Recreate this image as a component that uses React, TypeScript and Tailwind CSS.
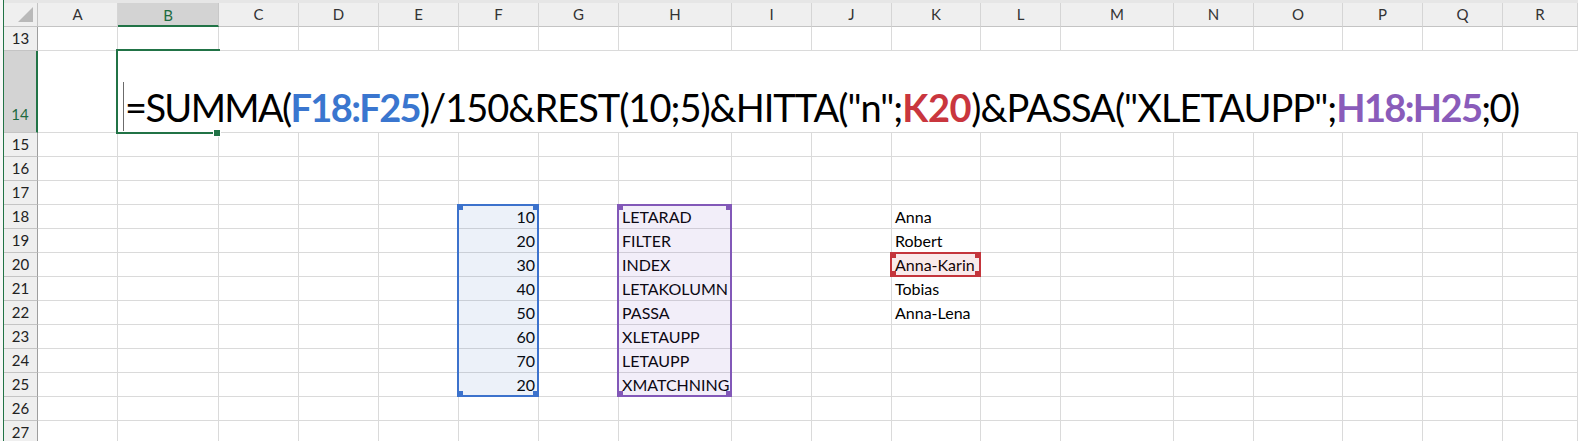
const COLS = ["A", "B", "C", "D", "E", "F", "G", "H", "I", "J", "K", "L", "M", "N", "O", "P", "Q", "R"];
const ROWS = [13, 14, 15, 16, 17, 18, 19, 20, 21, 22, 23, 24, 25, 26, 27];

const values: Record<string, string> = {
  F18: "10",
  F19: "20",
  F20: "30",
  F21: "40",
  F22: "50",
  F23: "60",
  F24: "70",
  F25: "20",
  H18: "LETARAD",
  H19: "FILTER",
  H20: "INDEX",
  H21: "LETAKOLUMN",
  H22: "PASSA",
  H23: "XLETAUPP",
  H24: "LETAUPP",
  H25: "XMATCHNING",
  K18: "Anna",
  K19: "Robert",
  K20: "Anna-Karin",
  K21: "Tobias",
  K22: "Anna-Lena",
};

// Corner handles drawn on a highlighted reference range
const Handles = ({ color }: { color: string }) => (
  <>
    <span className={`absolute -left-[2px] -top-[2px] h-[6px] w-[6px] ${color}`} />
    <span className={`absolute -right-[2px] -top-[2px] h-[6px] w-[6px] ${color}`} />
    <span className={`absolute -left-[2px] -bottom-[2px] h-[6px] w-[6px] ${color}`} />
    <span className={`absolute -right-[2px] -bottom-[2px] h-[6px] w-[6px] ${color}`} />
  </>
);

const Cell = ({ id }: { id: string }) => {
  const v = values[id];
  const numeric = v !== undefined && /^\d+$/.test(v);
  return (
    <div
      className={`flex h-[24px] items-end overflow-visible whitespace-nowrap border-b border-r border-[#dadada] pb-[3px] text-[16px] leading-none text-black ${
        numeric ? "justify-end pr-[3px]" : "pl-[3px]"
      }`}
    >
      {v}
    </div>
  );
};

export default function App() {
  return (
    <div className="relative h-[441px] w-full overflow-hidden bg-white font-[Lato,sans-serif]">
      <div className="flex">
        {/* outline gutter + window edge */}
        <div className="w-[3px] shrink-0 bg-[#f7f7f7]" />
        <div className="w-[1px] shrink-0 bg-[#217346]" />

        <div className="flex-1">
          <div className="h-[3px] bg-[#e6e6e6]" />
          <div className="grid grid-cols-[34px_80px_101px_80px_80px_80px_80px_80px_113px_80px_80px_89px_80px_113px_80px_89px_80px_80px_1fr]">
            {/* header row */}
            <div className="h-[24px] border-b border-r border-b-[#c4c4c4] border-r-[#c4c4c4] bg-[#efefef]">
              <svg width="33" height="23" className="block">
                <polygon points="29,4 29,19 14,19" fill="#b9b9b9" />
              </svg>
            </div>
            {COLS.map((c) =>
              c === "B" ? (
                <div
                  key={c}
                  className="flex h-[24px] items-center justify-center border-b-2 border-r border-b-[#217346] border-r-[#c8c8c8] bg-[#d3d3d3] pt-[2px] text-[15px] leading-none text-[#1d6b40]"
                >
                  {c}
                </div>
              ) : (
                <div
                  key={c}
                  className="flex h-[24px] items-center justify-center border-b border-r border-b-[#c4c4c4] border-r-[#d5d5d5] bg-[#efefef] text-[15px] leading-none text-[#333]"
                >
                  {c}
                </div>
              )
            )}

            {ROWS.map((r) =>
              r === 14 ? (
                <div key={r} className="contents">
                  <div className="flex h-[82px] items-end justify-center border-b border-r-2 border-b-[#c4c4c4] border-r-[#217346] bg-[#d3d3d3] pb-[10px] text-[15px] leading-none text-[#1d6b40]">
                    14
                  </div>
                  <div className="h-[82px] border-b border-r border-[#dadada]" />
                  {/* cell in edit mode, text runs across the row */}
                  <div className="col-span-17 flex h-[82px] items-end whitespace-nowrap border-b border-[#dadada] pb-[6px] text-[38px] leading-none tracking-[-1.65px] text-black">
                    <span className="mb-[-5px] mr-[1px] ml-[5px] inline-block h-[49px] w-[1px] bg-[#6b6b6b]" />
                    <span>=SUMMA(</span>
                    <span className="font-bold text-[#3a76cf]">F18:F25</span>
                    <span className="tracking-[-1px]">)/150&amp;REST(10;5)&amp;HITTA("n";</span>
                    <span className="font-bold tracking-[-0.4px] text-[#c9363e]">K20</span>
                    <span className="tracking-[-0.95px]">)&amp;PASSA("XLETAUPP";</span>
                    <span className="font-bold text-[#8a5cba]">H18:H25</span>
                    <span>;0)</span>
                  </div>
                </div>
              ) : (
                <div key={r} className="contents">
                  <div className="flex h-[24px] items-center justify-center border-b border-r border-b-[#c4c4c4] border-r-[#9e9e9e] bg-[#efefef] text-[15px] leading-none text-[#222]">
                    {r}
                  </div>
                  {COLS.map((c) => (
                    <Cell key={c} id={`${c}${r}`} />
                  ))}
                </div>
              )
            )}
          </div>
        </div>
      </div>

      {/* active cell B14 */}
      <div className="pointer-events-none absolute left-[116px] top-[49px] h-[85px] w-[104px] border-2 border-r-0 border-[#217346]" />
      <div className="pointer-events-none absolute left-[213px] top-[129px] h-[8px] w-[8px] border border-white bg-[#217346]" />

      {/* F18:F25 */}
      <div className="pointer-events-none absolute left-[457px] top-[204px] h-[193px] w-[82px] border-2 border-[#3c72cc] bg-[#4472c4]/10">
        <Handles color="bg-[#3c72cc]" />
      </div>
      {/* H18:H25 */}
      <div className="pointer-events-none absolute left-[617px] top-[204px] h-[193px] w-[115px] border-2 border-[#8258b8] bg-[#7e57c2]/10">
        <Handles color="bg-[#8258b8]" />
      </div>
      {/* K20 */}
      <div className="pointer-events-none absolute left-[890px] top-[252px] h-[25px] w-[91px] border-2 border-[#c4353c] bg-[#c4353c]/10">
        <Handles color="bg-[#c4353c]" />
      </div>
    </div>
  );
}
